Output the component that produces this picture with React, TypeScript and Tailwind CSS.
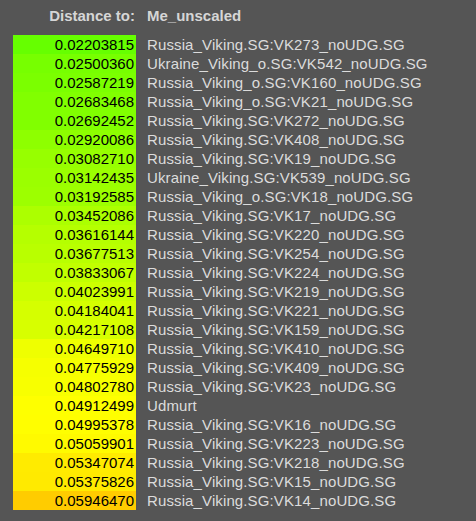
import React from "react";

const rows: [number, string][] = [
  [0.02203815, "Russia_Viking.SG:VK273_noUDG.SG"],
  [0.0250036, "Ukraine_Viking_o.SG:VK542_noUDG.SG"],
  [0.02587219, "Russia_Viking_o.SG:VK160_noUDG.SG"],
  [0.02683468, "Russia_Viking_o.SG:VK21_noUDG.SG"],
  [0.02692452, "Russia_Viking.SG:VK272_noUDG.SG"],
  [0.02920086, "Russia_Viking.SG:VK408_noUDG.SG"],
  [0.0308271, "Russia_Viking.SG:VK19_noUDG.SG"],
  [0.03142435, "Ukraine_Viking.SG:VK539_noUDG.SG"],
  [0.03192585, "Russia_Viking_o.SG:VK18_noUDG.SG"],
  [0.03452086, "Russia_Viking.SG:VK17_noUDG.SG"],
  [0.03616144, "Russia_Viking.SG:VK220_noUDG.SG"],
  [0.03677513, "Russia_Viking.SG:VK254_noUDG.SG"],
  [0.03833067, "Russia_Viking.SG:VK224_noUDG.SG"],
  [0.04023991, "Russia_Viking.SG:VK219_noUDG.SG"],
  [0.04184041, "Russia_Viking.SG:VK221_noUDG.SG"],
  [0.04217108, "Russia_Viking.SG:VK159_noUDG.SG"],
  [0.0464971, "Russia_Viking.SG:VK410_noUDG.SG"],
  [0.04775929, "Russia_Viking.SG:VK409_noUDG.SG"],
  [0.0480278, "Russia_Viking.SG:VK23_noUDG.SG"],
  [0.04912499, "Udmurt"],
  [0.04995378, "Russia_Viking.SG:VK16_noUDG.SG"],
  [0.05059901, "Russia_Viking.SG:VK223_noUDG.SG"],
  [0.05347074, "Russia_Viking.SG:VK218_noUDG.SG"],
  [0.05375826, "Russia_Viking.SG:VK15_noUDG.SG"],
  [0.0594647, "Russia_Viking.SG:VK14_noUDG.SG"],
];

// green -> yellow -> orange heat scale
function heat(d: number) {
  const r = Math.min(255, Math.round(102 + (d - 0.02204) * 5600));
  const g = Math.round(255 - Math.max(0, d - 0.0497) * 5200);
  return `rgb(${r},${g},0)`;
}

export default function App() {
  return (
    <div
      className="min-h-screen bg-[#555555] pt-[6px] pl-[13px] text-[15px] leading-[19px]"
      style={{ fontFamily: '"Liberation Sans", Arial, sans-serif' }}
    >
      <div className="flex h-[19px] mb-[10px] font-bold text-[#d6d6d6]">
        <div className="w-[123px] text-right pr-[1px]">Distance to:</div>
        <div className="pl-[11px]">Me_unscaled</div>
      </div>
      <div className="flex flex-col">
        {rows.map(([d, name]) => (
          <div key={name} className="flex h-[19px]">
            <div
              className="w-[123px] text-right pr-[2px] text-black"
              style={{ backgroundColor: heat(d) }}
            >
              {d.toFixed(8)}
            </div>
            <div className="pl-[11px] text-[#dcdcdc] whitespace-nowrap tracking-[0.12px]">
              {name}
            </div>
          </div>
        ))}
      </div>
    </div>
  );
}
